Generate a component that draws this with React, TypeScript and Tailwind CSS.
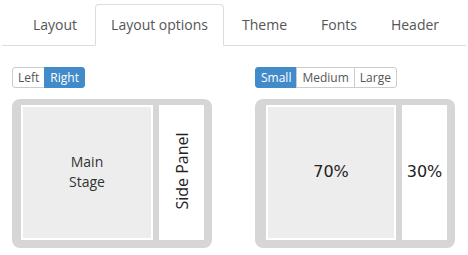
const tabs = ["Layout", "Layout options", "Theme", "Fonts", "Header"];

function BtnGroup({ items, active }: { items: string[]; active: string }) {
  return (
    <div className="flex h-[21px] w-fit text-[12px] leading-[19px]">
      {items.map((item, i) => (
        <div
          key={item}
          className={
            "px-[5px] border whitespace-nowrap " +
            (item === active
              ? "bg-[#428bca] border-[#428bca] text-white"
              : "bg-white border-[#ccc] text-[#555]") +
            (i === 0 ? " rounded-l-[3px]" : " -ml-px") +
            (i === items.length - 1 ? " rounded-r-[3px]" : "")
          }
        >
          {item}
        </div>
      ))}
    </div>
  );
}

export default function App() {
  return (
    <div className="w-[468px] h-[255px] bg-white font-['Open_Sans',sans-serif] text-[#555]">
      {/* Tabs */}
      <div className="flex ml-[2px] mr-[2px] pl-[15px] pt-[4px] border-b border-[#ddd]">
        {tabs.map((t) => (
          <div
            key={t}
            className={
              "mr-[2px] -mb-px px-[15px] py-[10px] text-[14px] leading-[20px] whitespace-nowrap border rounded-t-[4px] " +
              (t === "Layout options"
                ? "bg-white border-[#ddd] border-b-white"
                : "border-transparent")
            }
          >
            {t}
          </div>
        ))}
      </div>

      {/* Options */}
      <div className="flex pl-[12px] pt-[21px] gap-[43px]">
        <div className="flex flex-col gap-[11px]">
          <BtnGroup items={["Left", "Right"]} active="Right" />
          <div className="flex w-[200px] h-[149px] bg-[#d6d6d6] rounded-[8px] pt-[6px] pb-[8px] pl-[9px] pr-[8px] gap-[6px]">
            <div className="w-[132px] pb-[2px] bg-[#ededed] border-2 border-white flex items-center justify-center text-center text-[14px] leading-[20px] text-[#333]">
              Main
              <br />
              Stage
            </div>
            <div className="w-[45px] pb-[3px] bg-white flex items-center justify-center">
              <span className="-rotate-90 whitespace-nowrap text-[16px] leading-[20px] text-[#222]">
                Side Panel
              </span>
            </div>
          </div>
        </div>

        <div className="flex flex-col gap-[11px]">
          <BtnGroup items={["Small", "Medium", "Large"]} active="Small" />
          <div className="flex w-[200px] h-[149px] bg-[#d6d6d6] rounded-[8px] pt-[6px] pb-[8px] pl-[11px] pr-[8px] gap-[6px]">
            <div className="w-[130px] pb-[2px] bg-[#ededed] border-2 border-white flex items-center justify-center font-['DejaVu_Sans',sans-serif] text-[16px] text-[#222]">
              70%
            </div>
            <div className="w-[45px] pb-[2px] bg-white flex items-center justify-center font-['DejaVu_Sans',sans-serif] text-[16px] text-[#222]">
              30%
            </div>
          </div>
        </div>
      </div>
    </div>
  );
}
